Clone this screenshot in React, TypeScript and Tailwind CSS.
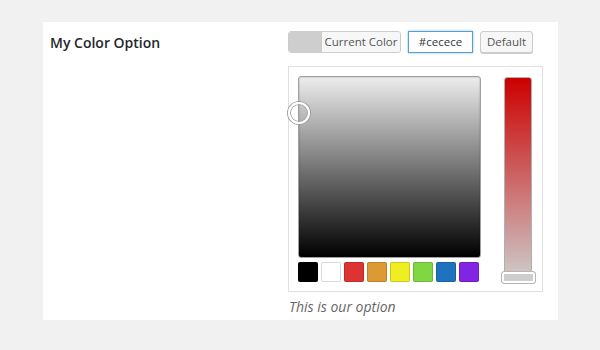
const swatches = ['#000000', '#ffffff', '#dd3333', '#dd9933', '#eeee22', '#81d742', '#1e73be', '#8224e3']

export default function App() {
  return (
    <div className="w-[600px] h-[350px] bg-[#f1f1f1] pt-[22px] pl-[43px] font-['Open_Sans',sans-serif]">
      <div className="w-[515px] h-[298px] bg-white flex">
        {/* label column */}
        <div className="w-[245px] pl-[7px] pt-[11px]">
          <div className="text-[14px] leading-[20px] font-semibold text-[#23282d]">My Color Option</div>
        </div>

        {/* field column */}
        <div className="pt-[9px]">
          <div className="flex items-center h-[22px]">
            <div className="flex h-[22px] rounded-[3px] border border-[#cccccc] overflow-hidden">
              <span className="w-[32px] bg-[#cecece]" />
              <span className="w-[79px] text-center bg-[#f7f7f7] border-l border-[#cccccc] text-[11.5px] leading-[20px] text-[#555555]">
                Current Color
              </span>
            </div>
            <div className="ml-[7px] w-[65px] h-[22px] border border-[#5b9dd9] shadow-[0_0_2px_rgba(30,140,190,0.6)] text-[11.5px] leading-[20px] text-[#32373c] text-center">
              #cecece
            </div>
            <div className="ml-[7px] w-[53px] text-center h-[22px] rounded-[3px] border border-[#cccccc] bg-[#f7f7f7] text-[11.5px] leading-[20px] text-[#555555] shadow-[0_1px_0_#cccccc]">
              Default
            </div>
          </div>

          <div className="mt-[13px] w-[255px] h-[226px] border border-[#dfdfdf] pt-[9px] pl-[9px] flex">
            <div>
              <div className="relative w-[183px] h-[182px] rounded-[3px] border border-[#a0a0a0] bg-[linear-gradient(to_bottom,#ededed,#000000)] shadow-[inset_0_0_2px_rgba(0,0,0,0.3)]">
                <span className="absolute left-[-11px] top-[25px] w-[22px] h-[22px] rounded-full border-2 border-white shadow-[0_0_0_1px_#a0a0a0,inset_0_0_0_1px_#a0a0a0]" />
              </div>
              <div className="mt-[4px] flex gap-[3px]">
                {swatches.map((c) => (
                  <span
                    key={c}
                    className="w-[20px] h-[20px] rounded-[2px] shadow-[inset_0_0_0_1px_rgba(0,0,0,0.15)]"
                    style={{ backgroundColor: c }}
                  />
                ))}
              </div>
            </div>
            <div className="relative ml-[23px] mt-[1px] w-[28px] h-[206px] rounded-[3px] border border-[#b0b0b0] bg-[linear-gradient(to_bottom,#cc0000,#cecece)]">
              <span className="absolute left-[-4px] bottom-[-2px] w-[35px] h-[13px] rounded-[3px] border border-[#b5b5b5] bg-[#cecece] shadow-[inset_0_0_0_2px_#ffffff]" />
            </div>
          </div>

          <div className="mt-[5px] pl-[1px] text-[14px] leading-[20px] italic text-[#666666]">This is our option</div>
        </div>
      </div>
    </div>
  )
}
